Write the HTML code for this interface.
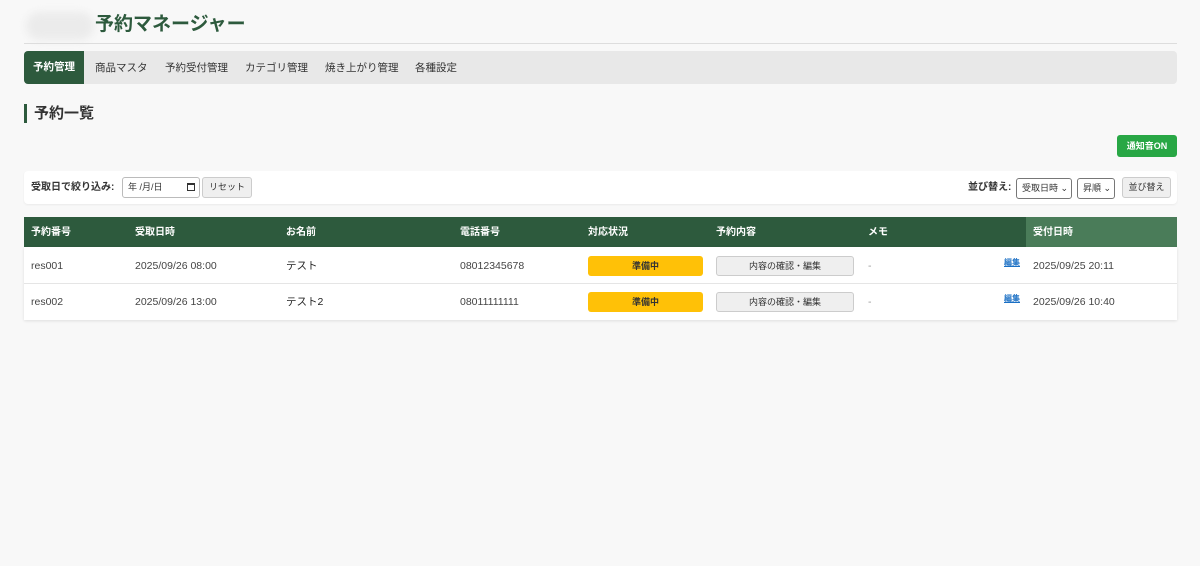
<!DOCTYPE html>
<html><head><meta charset="utf-8"><style>
*{box-sizing:border-box;margin:0;padding:0}
body{width:1200px;height:566px;background:#f8f8f8;font-family:"Liberation Sans","Noto Sans CJK JP",sans-serif;color:#333;position:relative;overflow:hidden}
.a{position:absolute;white-space:nowrap}
.blob{left:26px;top:12px;width:68px;height:28px;border-radius:14px;background:#ebebeb;filter:blur(4px)}
.title{left:95px;top:12px;font-size:19px;font-weight:bold;color:#2d5a3d;line-height:26px}
.hr{left:24px;top:43px;width:1153px;height:1px;background:#ddd}
.nav{left:24px;top:51px;width:1153px;height:33px;background:#e8e8e8;border-radius:4px}
.tab{top:52px;height:33px;line-height:33px;font-size:10.5px;color:#333}
.act{left:24px;top:51px;width:60px;background:#2d5a3d;color:#fff;text-align:center;border-radius:4px 0 0 4px;font-weight:bold}
.h2bar{left:24px;top:104px;width:3px;height:19px;background:#2d5a3d}
.h2{left:34px;top:104px;font-size:15px;font-weight:bold;line-height:20px;color:#333}
.notif{left:1117px;top:135px;width:60px;height:22px;background:#28a745;color:#fff;font-size:9px;font-weight:bold;text-align:center;line-height:22px;border-radius:3px}
.panel{left:24px;top:171px;width:1153px;height:33px;background:#fff;border-radius:4px;box-shadow:0 1px 2px rgba(0,0,0,.06)}
.lbl{font-size:10px;font-weight:bold;line-height:12px}
.inp{height:21px;border:1px solid #bbb;border-radius:3px;background:#fff;font-size:9px;line-height:19px;padding-left:5px}
.btn{height:21px;border:1px solid #ccc;border-radius:3px;background:#efefef;font-size:9px;line-height:19px;text-align:center}
.th{left:24px;top:217px;width:1153px;height:30px;background:#2d5a3d}
.th2{left:1026px;top:217px;width:151px;height:30px;background:#4a7c59}
.hc{top:218px;line-height:30px;color:#fff;font-size:10px;font-weight:bold}
.rows{left:24px;top:247px;width:1153px;height:73px;background:#fff;box-shadow:0 1px 3px rgba(0,0,0,.1)}
.sep{left:24px;top:283px;width:1153px;height:1px;background:#e5e5e5}
.c{font-size:10.5px;color:#444;line-height:14px}
.badge{width:115px;height:20px;background:#ffc107;border-radius:3px;font-size:9px;font-weight:bold;text-align:center;line-height:20px;color:#333}
.cb{width:138px;height:20px;background:#efefef;border:1px solid #ccc;border-radius:3px;font-size:9px;text-align:center;line-height:18px}
.edit{font-size:8px;color:#1a6fc4;text-decoration:underline;font-weight:bold}
.cal{left:187px;top:183px;width:8px;height:8px;border:1px solid #333;border-top-width:2px}
</style></head><body>
<div class="a blob"></div>
<div class="a title">予約マネージャー</div>
<div class="a hr"></div>
<div class="a nav"></div>
<div class="a tab act">予約管理</div>
<div class="a tab" style="left:95px">商品マスタ</div>
<div class="a tab" style="left:165px">予約受付管理</div>
<div class="a tab" style="left:245px">カテゴリ管理</div>
<div class="a tab" style="left:325px">焼き上がり管理</div>
<div class="a tab" style="left:415px">各種設定</div>
<div class="a h2bar"></div>
<div class="a h2">予約一覧</div>
<div class="a notif">通知音ON</div>
<div class="a panel"></div>
<div class="a lbl" style="left:31px;top:182px">受取日で絞り込み:</div>
<div class="a inp" style="left:122px;top:177px;width:78px">年 /月/日</div>
<div class="a cal"></div>
<div class="a btn" style="left:202px;top:177px;width:50px">リセット</div>
<div class="a lbl" style="left:968px;top:182px">並び替え:</div>
<div class="a inp" style="left:1016px;top:178px;width:56px;border-color:#777">受取日時 ⌄</div>
<div class="a inp" style="left:1077px;top:178px;width:38px;border-color:#777">昇順 ⌄</div>
<div class="a btn" style="left:1122px;top:177px;width:49px">並び替え</div>
<div class="a th"></div><div class="a th2"></div>
<div class="a hc" style="left:31px">予約番号</div>
<div class="a hc" style="left:135px">受取日時</div>
<div class="a hc" style="left:286px">お名前</div>
<div class="a hc" style="left:460px">電話番号</div>
<div class="a hc" style="left:588px">対応状況</div>
<div class="a hc" style="left:716px">予約内容</div>
<div class="a hc" style="left:868px">メモ</div>
<div class="a hc" style="left:1033px">受付日時</div>
<div class="a rows"></div><div class="a sep"></div>
<div class="a c" style="left:31px;top:259px">res001</div>
<div class="a c" style="left:135px;top:259px">2025/09/26 08:00</div>
<div class="a c" style="left:286px;top:259px;color:#222">テスト</div>
<div class="a c" style="left:460px;top:259px">08012345678</div>
<div class="a badge" style="left:588px;top:256px">準備中</div>
<div class="a cb" style="left:716px;top:256px">内容の確認・編集</div>
<div class="a c" style="left:868px;top:259px;color:#999">-</div>
<div class="a edit" style="left:1004px;top:257px">編集</div>
<div class="a c" style="left:1033px;top:259px">2025/09/25 20:11</div>
<div class="a c" style="left:31px;top:295px">res002</div>
<div class="a c" style="left:135px;top:295px">2025/09/26 13:00</div>
<div class="a c" style="left:286px;top:295px;color:#222">テスト2</div>
<div class="a c" style="left:460px;top:295px">08011111111</div>
<div class="a badge" style="left:588px;top:292px">準備中</div>
<div class="a cb" style="left:716px;top:292px">内容の確認・編集</div>
<div class="a c" style="left:868px;top:295px;color:#999">-</div>
<div class="a edit" style="left:1004px;top:293px">編集</div>
<div class="a c" style="left:1033px;top:295px">2025/09/26 10:40</div>
</body></html>
